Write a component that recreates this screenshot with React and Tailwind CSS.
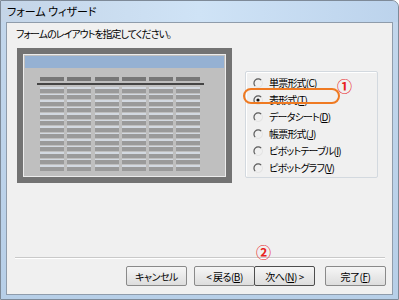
import React from "react";

const jp = "font-['MS_UI_Gothic','Noto_Sans_CJK_JP',sans-serif] [font-feature-settings:'palt']";

function Radio({ checked }) {
  return (
    <svg width="10" height="10" viewBox="0 0 10 10" className="shrink-0">
      <path d="M8.2 2.2 A4 4 0 1 0 2.2 8.2" fill="none" stroke="#5a5a5a" strokeWidth="1.2" />
      <path d="M2.2 8.2 A4 4 0 0 0 8.2 2.2" fill="none" stroke="#e4e4e4" strokeWidth="1.2" />
      {checked && <circle cx="5" cy="5" r="1.6" fill="#111" />}
    </svg>
  );
}

function Label({ text, k }) {
  return (
    <span className="tracking-[-0.8px]">
      {text}(<span className="underline underline-offset-1">{k}</span>)
    </span>
  );
}

const items = [
  ["単票形式", "C"],
  ["表形式", "T", true],
  ["データシート", "D"],
  ["帳票形式", "J"],
  ["ピボットテーブル", "I"],
  ["ピボットグラフ", "V"],
];

function Preview() {
  const cols = [0, 1, 2, 3, 4, 5];
  const rows = Array.from({ length: 13 }, (_, i) => i);
  return (
    <div className="w-[215px] h-[135px] shrink-0 border-[6px] border-[#737373] bg-[#737373]">
      <div className="w-full h-full border border-[#ececec] bg-[#bfbfbf] flex flex-col p-px">
        <div className="h-[12px] bg-[#95b1d3] shrink-0" />
        <div className="pl-[12px] pt-[9px] w-[179px]">
          <div className="flex gap-[3.3px] pl-[3px]">
            {cols.map((c) => (
              <div key={c} className="w-[24px] h-[4px] bg-[#777]" />
            ))}
          </div>
          <div className="h-[2px] bg-[#454545] mt-[2px]" />
          <div className="flex flex-col pl-[3px] pt-[2px]">
            {rows.map((r) => (
              <div key={r} className="flex gap-[3.3px] h-[6.5px]">
                {cols.map((c) => (
                  <div key={c} className="w-[24px] h-[6.5px] flex flex-col">
                    <div className="h-[1.5px] bg-[#d3d9e1]" />
                    <div className="h-[4px] bg-[#9a9a9a]" />
                  </div>
                ))}
              </div>
            ))}
          </div>
        </div>
      </div>
    </div>
  );
}

function Btn({ children, focus, extra }) {
  return (
    <div
      className={
        "relative h-[20px] w-[61px] flex items-center justify-center rounded-[2px] text-[10px] tracking-[-0.5px] text-black bg-gradient-to-b from-[#f6f6f6] to-[#dddddd] border " +
        (focus ? "border-[#4d4d4d]" : "border-[#8a8a8a]") +
        (extra ? " " + extra : "")
      }
    >
      {children}
    </div>
  );
}

export default function App() {
  return (
    <div className={"w-[399px] h-[300px] bg-white overflow-hidden " + jp}>
      <div className="w-[399px] h-[300px] flex flex-col rounded-tr-[7px] border border-[#7e8a98] bg-gradient-to-b from-[#c3d7ec] to-[#b7cfe8]">
        <div className="h-[21px] shrink-0 flex items-center pl-[6px] text-[11px] text-black bg-gradient-to-r from-[#c4d5e8] via-[#cfe3f6] to-[#bcd3ec] rounded-tr-[7px]">
          フォーム ウィザード
        </div>
        <div className="flex-1 flex px-[5px] pb-[4px]">
          <div className="flex-1 flex flex-col border border-[#8f9cab] bg-[#f0f0f0]">
            <div className="pl-[9px] pt-[4px] text-[10px] leading-[14px] tracking-[-1px] text-black">
              フォームのレイアウトを指定してください。
            </div>
            <div className="flex pl-[10px] pt-[7px]">
              <Preview />
              <div className="relative ml-[13px] mt-[23px] w-[133px] h-[107px] border border-[#d3d9df] rounded-[2px] shadow-[inset_1px_1px_0_#ffffff] pt-[2px]">
                {items.map(([t, k, c]) => (
                  <div key={k} className="h-[17px] flex items-center pl-[7px] gap-[6px] text-[10px] text-black">
                    <Radio checked={c} />
                    <Label text={t} k={k} />
                  </div>
                ))}
                <div className="absolute left-[-3px] top-[16px] w-[97px] h-[16px] rounded-[8px] border-2 border-[#ef7a22]" />
                <div className="absolute left-[91px] top-[6px] text-[15px] leading-[15px] font-bold text-[#e8231f]">①</div>
              </div>
            </div>
            <div className="flex-1" />
            <div className="ml-[8px] mr-[7px] h-[2px] border-t border-[#c9c9c9] border-b border-b-white" />
            <div className="flex justify-end pr-[6px] pt-[7px] pb-[8px]">
              <Btn>キャンセル</Btn>
              <div className="w-[7px]" />
              <Btn>
                <span>&lt; 戻る(<span className="underline underline-offset-1">B</span>)</span>
              </Btn>
              <Btn focus extra="-ml-px">
                <span>次へ(<span className="underline underline-offset-1">N</span>) &gt;</span>
                <div className="absolute left-[1px] top-[-23px] text-[15px] leading-[15px] font-bold text-[#e8231f] tracking-normal">②</div>
              </Btn>
              <div className="w-[10px]" />
              <Btn>
                <span>完了(<span className="underline underline-offset-1">F</span>)</span>
              </Btn>
            </div>
          </div>
        </div>
      </div>
    </div>
  );
}
